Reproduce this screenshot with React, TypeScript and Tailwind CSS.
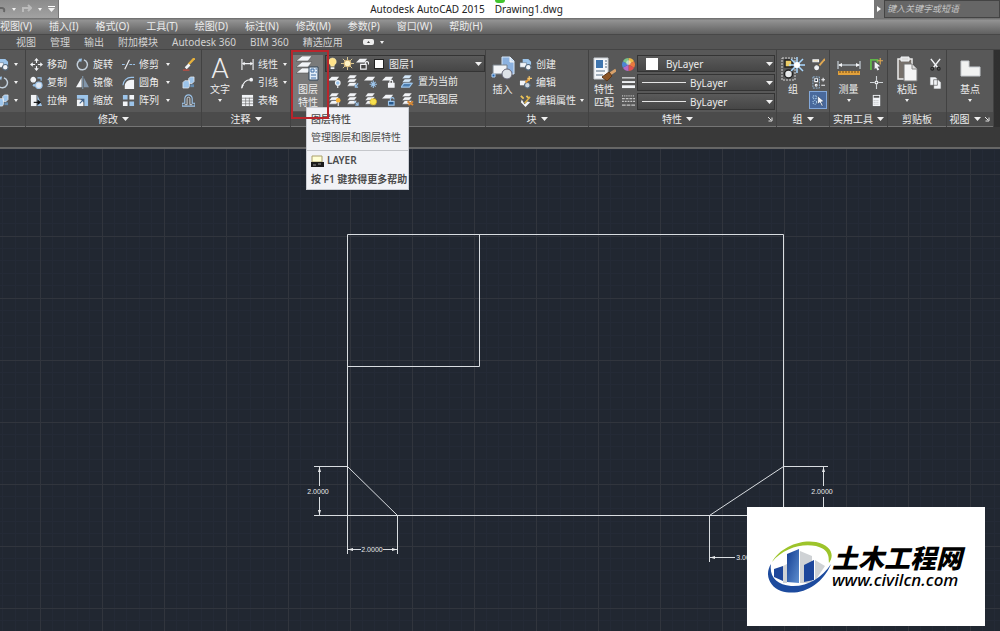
import type { ReactNode } from "react";
import clsx from "clsx";

type Children = { children?: ReactNode };

const W = "#f2f4f7";
const B = "#9cc4ea";

function Ico({ children, size = 13 }: Children & { size?: number }) {
  return (
    <svg width={size} height={size} viewBox="0 0 14 14" fill="none" stroke={W} strokeWidth="1.2" className="shrink-0" aria-hidden="true">
      {children}
    </svg>
  );
}

function Caret({ small }: { small?: boolean }) {
  return (
    <svg width={small ? 4 : 7} height={small ? 3 : 4} viewBox="0 0 8 4" preserveAspectRatio="none" className="shrink-0" aria-hidden="true">
      <path d="M0 0h8L4 4z" fill="#f0f0f0" />
    </svg>
  );
}

function Launcher() {
  return (
    <svg width="6" height="6" viewBox="0 0 6 6" className="absolute right-[3px] top-1" aria-hidden="true">
      <path d="M1 1l3 3M5 1.5V5H1.5" stroke="#e5e5e5" fill="none" />
    </svg>
  );
}

/* small ribbon icons */
const Move = () => (
  <Ico>
    <path d="M7 2v3.500M7 8.500v3.500M2 7h3.500M8.500 7H12" />
    <path d="M7 0l2.500 3h-5zM7 14l2.500-3h-5zM0 7l3-2.500v5zM14 7l-3-2.500v5z" fill={W} stroke="none" />
  </Ico>
);
const Rotate = () => (
  <Ico>
    <path d="M8.500 2A5.500 5.500 0 1 1 4.200 2.400" stroke="#c3d0dc" strokeWidth="1.600" />
    <path d="M2.500 1l4-.5-1 4z" fill={B} stroke="none" />
  </Ico>
);
const Trim = () => (
  <Ico>
    <path d="M0 7h4M8 7h6" stroke={B} strokeDasharray="3 1" />
    <path d="M3 12L8 2" />
  </Ico>
);
const Copy = () => (
  <Ico>
    <circle cx="3.500" cy="4" r="2.500" fill={W} />
    <circle cx="9.500" cy="10" r="3.500" fill="#dfe6f0" stroke={B} />
    <circle cx="4.500" cy="10" r="1.500" fill={B} stroke="none" />
    <path d="M8 2h4v3" stroke={B} />
  </Ico>
);
const Mirror = () => (
  <Ico>
    <path d="M6 2v10H0z" fill={W} stroke="none" />
    <path d="M8.500 2v10H14z" fill="#8296ab" stroke="none" />
    <path d="M7.300 0v14" stroke={B} strokeWidth=".7" />
  </Ico>
);
const Fillet = () => (
  <Ico>
    <path d="M3 14V11a7 7 0 0 1 7-7h3v10z" fill={W} stroke="none" />
    <path d="M1 10a9 9 0 0 1 9-8.500h3" stroke={B} />
  </Ico>
);
const Stretch = () => (
  <Ico>
    <path d="M1 1h6v12H1z" fill={W} stroke="none" />
    <path d="M8 1l5 12H8z" fill={B} stroke="none" />
    <path d="M4 9h5" stroke="#111" />
    <path d="M8 6l4 3-4 3z" fill="#111" stroke="none" />
  </Ico>
);
const Scale = () => (
  <Ico>
    <path d="M1 1h12v12H9V5H1z" fill={B} stroke="none" />
    <path d="M1 6h7v7H1z" fill={W} stroke="none" />
    <path d="M4 10l4-4M5 6h3v3" stroke="#40628a" />
  </Ico>
);
const ArrayIcon = () => (
  <Ico>
    <path d="M1 1h5v5H1zM8 8h5v5H8z" fill={B} stroke="none" />
    <path d="M8 1h5v5H8zM1 8h5v5H1z" fill={W} stroke="none" />
  </Ico>
);
const Erase = () => (
  <Ico>
    <path d="M13.500 0L7 7" stroke="#e5b13d" strokeWidth="2.500" />
    <path d="M8 7L4 11" strokeWidth="3" />
    <path d="M1 13h7" stroke="#d44a3d" />
  </Ico>
);
const Explode = () => (
  <Ico>
    <path d="M1 7l2-2h5v6l-1 2H1zM7 3l2-2h4v5l-2 2H8z" fill={B} stroke={W} strokeWidth=".7" />
    <path d="M9 9h4v3H9z" fill="#668caf" stroke="none" />
  </Ico>
);
const Offset = () => (
  <Ico>
    <path d="M0 13h14v-3h-3V5a4 4 0 0 0-8 0v5H0z" stroke={B} />
    <path d="M3 11.500h2.500V5a1.500 1.500 0 0 1 3 0v6.500H11" stroke={W} strokeWidth=".8" />
  </Ico>
);
const Linear = () => (
  <Ico>
    <path d="M1 1v12M13 1v12M2 6h10" />
    <path d="M1 6l3-2v4zM13 6l-3-2v4z" fill={W} stroke="none" />
  </Ico>
);
const Leader = () => (
  <Ico>
    <path d="M1 13C2 8 4 4 10 4" />
    <circle cx="11" cy="4" r="2" fill={W} stroke="none" />
    <path d="M0 14l1-5 2 1z" fill={W} stroke="none" />
  </Ico>
);
const TableIcon = () => (
  <Ico>
    <path d="M1 1h12v12H1z" fill={W} stroke="none" />
    <path d="M0 4.500h14M0 7.500h14M0 10.500h14M5 4v10M9 4v10" stroke="#666" strokeWidth=".7" />
  </Ico>
);

function Sheets({ tone = W, children }: Children & { tone?: string }) {
  return (
    <Ico>
      <path d="M4 0h8L9 4H1zM4 4h8l-3 4H1zM4 8h8l-3 4H1z" fill={tone} stroke="#444" strokeWidth=".5" />
      {children}
    </Ico>
  );
}
function Sheet({ children }: Children) {
  return (
    <Ico>
      <path d="M4 2h8L9 6H0z" fill={W} stroke="none" />
      {children}
    </Ico>
  );
}
const Bulb = () => (
  <Ico>
    <path d="M7 1a4 4 0 0 0-2 7.500V10h4V8.500A4 4 0 0 0 7 1z" fill="#ffe38a" stroke="#fff2bd" strokeWidth=".5" />
    <path d="M5 12h4" strokeWidth="2" />
  </Ico>
);
const Sun = () => (
  <Ico>
    <path d="M7 0v14M0 7h14M2 2l10 10M12 2L2 12" stroke="#f4dfa0" strokeWidth=".9" />
    <circle cx="7" cy="7" r="3.500" fill="#fff4c5" stroke="#d8b878" />
  </Ico>
);
const Unlock = () => (
  <Sheet>
    <path d="M5 8h6v5H5z" fill="#444" />
    <path d="M10 8V6a2 2 0 0 1 3.500 0v2" />
  </Sheet>
);

const layerTools = [
  [
    <Sheet key="a"><circle cx="10.500" cy="8.500" r="2.500" fill={B} /><path d="M10.500 11v3" /></Sheet>,
    <Sheets key="b"><path d="M13 9l-3 4M10 10v3h3" stroke={B} /></Sheets>,
    <Sheet key="c"><path d="M10 6v8M6 10h8M7.500 7.500l5 5M12.500 7.500l-5 5" stroke={B} /></Sheet>,
    <Sheet key="d"><path d="M7 9h6v4H7z" fill={W} /><path d="M8.500 9V7a1.500 1.500 0 0 1 3 0v2" /></Sheet>,
    <Sheets key="e" tone="#d4e7f8"><path d="M3 9h9l-3 4H0z" fill="#4c7eb1" stroke={B} /></Sheets>,
  ],
  [
    <Sheets key="a"><circle cx="11" cy="8" r="2.500" fill="#ffb938" stroke="none" /><path d="M11 10v4" /></Sheets>,
    <Sheets key="b"><path d="M9 9l4 4M13 10v3h-3" stroke={B} /></Sheets>,
    <Sheets key="c"><circle cx="10" cy="9.500" r="3.500" fill="#f6e04e" stroke="#d5ac25" strokeDasharray="1 1" /></Sheets>,
    <Sheet key="d"><path d="M7 9h6v4H7z" fill="#28598c" stroke={B} /><path d="M9 9V7a2 2 0 0 1 4 0" stroke={B} /></Sheet>,
    <Sheets key="e"><path d="M7 9l6 4M13 9l-5 4" stroke="#d78a38" strokeWidth="2" /></Sheets>,
  ],
];

const Create = () => (
  <Ico>
    <path d="M4 1h6l3 3v4H4z" fill={B} stroke="none" />
    <path d="M1 5h7v5H1z" fill={W} stroke="#526679" strokeWidth=".5" />
    <circle cx="10" cy="10" r="3" fill={W} stroke="#526679" />
  </Ico>
);
const EditBlock = () => (
  <Ico>
    <path d="M1 5h7v5H1z" fill={W} stroke="none" />
    <circle cx="9" cy="10" r="3" fill="#ccd5df" stroke="#526679" />
    <path d="M7 7l5-5" stroke="#e39a3b" strokeWidth="2" />
    <path d="M11 0v5M9 2.500h5" stroke="#f5c56a" />
  </Ico>
);
const EditAttr = () => (
  <Ico>
    <path d="M2 2l3 3M8 2l3 3" stroke="#ecc45a" strokeWidth="2" />
    <path d="M3 6l3 5 3-3 3 1-5 5-5-5z" fill={W} stroke="none" />
    <path d="M6 10l6-7" stroke="#deb244" strokeWidth="1.500" />
  </Ico>
);
const Wheel = () => (
  <Ico>
    <path d="M7 7V0a7 7 0 0 1 6 3.500z" fill="#efb943" stroke="none" />
    <path d="M7 7l6-3.500a7 7 0 0 1 0 7z" fill="#e9793f" stroke="none" />
    <path d="M7 7l6 3.500A7 7 0 0 1 7 14z" fill="#e0504d" stroke="none" />
    <path d="M7 7v7a7 7 0 0 1-6-3.500z" fill="#b46ac6" stroke="none" />
    <path d="M7 7l-6 3.500a7 7 0 0 1 0-7z" fill="#4c84d3" stroke="none" />
    <path d="M7 7L1 3.500A7 7 0 0 1 7 0z" fill="#7cc38a" stroke="none" />
    <circle cx="7" cy="5" r="2.500" fill="#fff" fillOpacity=".5" stroke="none" />
  </Ico>
);
const Weights = () => (
  <Ico>
    <path d="M0 2h14" />
    <path d="M0 6.500h14" strokeWidth="2" />
    <path d="M0 11.500h14" strokeWidth="3" />
  </Ico>
);
const Dashes = () => (
  <Ico>
    <path d="M0 2h14" strokeDasharray="1 1" stroke="#c4c4c4" />
    <path d="M0 5h14" strokeDasharray="3 1" stroke="#c4c4c4" />
    <path d="M0 8h14" strokeDasharray="2 1" stroke="#c4c4c4" />
    <path d="M0 12h14" strokeDasharray="4 1" stroke="#c4c4c4" />
  </Ico>
);
const Ungroup = () => (
  <Ico>
    <path d="M1 2h6v2H1z" fill="#f4d58d" stroke={W} />
    <circle cx="5" cy="10.500" r="2" fill={W} />
    <path d="M14 1L8 8" stroke="#e0a852" strokeWidth="2" />
  </Ico>
);
const GroupEdit = () => (
  <Ico>
    <path d="M1 1h7v12H1z" stroke={B} strokeWidth=".9" strokeDasharray="2 1" />
    <path d="M3 3h3v3H3z" fill="#1c2c3f" />
    <circle cx="4.500" cy="10" r="1" />
    <path d="M10 4h4M12 2v4M10 10h4" />
  </Ico>
);
const GroupSelect = () => (
  <Ico>
    <path d="M1 2h4v3H1z" stroke="#a8cce8" strokeDasharray="1 1" />
    <circle cx="3" cy="9" r="2" stroke="#a8cce8" strokeDasharray="1 1" />
    <path d="M6 2l7 6-3 .5 2 4-1.500.7-2-4L6 11z" fill={W} stroke="#28405f" strokeWidth=".6" />
  </Ico>
);
const QuickSelect = () => (
  <Ico>
    <path d="M1 13V2h7v3" stroke="#5fb548" strokeWidth="2" />
    <path d="M5 4l6 5-3 .5 2 3-2 1-1.500-3L5 12z" fill={W} stroke="none" />
    <path d="M11 0v7M8 3h6" stroke="#e0a852" />
  </Ico>
);
const PointIcon = () => (
  <Ico>
    <path d="M7 0v5M7 9v5M0 7h5M9 7h5" stroke="#cfd3d6" />
    <circle cx="7" cy="7" r="1.500" />
  </Ico>
);
const Calc = () => (
  <Ico>
    <path d="M3 1h8v12H3z" fill={W} stroke="none" />
    <path d="M4 3h6" stroke="#555" strokeWidth="2" />
    <path d="M4 7h6M4 9h6M4 11h6" stroke="#999" strokeWidth=".7" strokeDasharray="1 1" />
  </Ico>
);
const Cut = () => (
  <Ico>
    <path d="M2 1l7 9M12 1l-7 9" strokeWidth="1.500" />
    <circle cx="3.500" cy="11.500" r="1.500" stroke="#222" />
    <circle cx="10.500" cy="11.500" r="1.500" stroke="#222" />
  </Ico>
);
const CopyClip = () => (
  <Ico>
    <path d="M1 1h6l2 2v7H1zM5 4h5l3 3v7H5z" fill={W} stroke="#555" strokeWidth=".7" />
  </Ico>
);

/* large ribbon icons, 24 x 26 */
function Big({ children }: Children) {
  return (
    <svg width="24" height="26" viewBox="0 0 24 26" fill="none" stroke={W} className="shrink-0" aria-hidden="true">
      {children}
    </svg>
  );
}
const LayerBig = () => (
  <Big>
    <path d="M6 12h10l-4 5H0zM6 6h10l-4 5H0zM6 0h10l-4 5H0z" fill={W} stroke="#555" strokeWidth=".6" />
    <path d="M13 11h9v13h-9z" fill="#e3edf8" stroke="#2f4357" />
    <path d="M15 13h3v3h-3zM15 19h5M15 22h5M19.500 13h1.500M19.500 16h1.500" stroke="#3a6ba3" />
  </Big>
);
const InsertBig = () => (
  <Big>
    <path d="M11 1h8l4 4v13H11z" fill="#8bb1df" stroke="#d5e7fa" />
    <path d="M19 1v5h4" fill="#d5e7fa" />
    <path d="M2 9h14v9H2z" fill={W} stroke="#77808a" />
    <circle cx="16" cy="18" r="5" fill="#dde2e8" stroke="#667" />
    <path d="M1 18h3v3H1z" fill="#2466b1" stroke="#b1d0f2" />
  </Big>
);
const MatchBig = () => (
  <Big>
    <path d="M2 2h14v21H2z" fill="#f5f7fa" stroke="#c8cdd2" />
    <path d="M4 4h7v8H4z" fill="#3f75ae" stroke="none" />
    <path d="M13 5h2M13 8h2M13 11h2M4 15h9M4 19h7" stroke="#526a80" />
    <path d="M24 14l-6 4" stroke="#d8a16a" strokeWidth="3" />
    <path d="M17 16l3 4-5 5-5-4z" fill="#8b5527" stroke="#5c371b" />
  </Big>
);
const GroupBig = () => (
  <Big>
    <path d="M1 2h13v22H1z" stroke="#d5d5d5" strokeDasharray="2 1" />
    <path d="M4 4h7v7H4z" fill="#eacb67" stroke="#222" strokeWidth="1.500" />
    <circle cx="7.500" cy="18" r="4" fill="#e7e9ea" stroke="#222" strokeWidth="1.500" />
    <path d="M16 1v16M8 9h16M10 3l12 12M22 3L10 15" stroke="#a9d8ff" strokeWidth="1.500" />
    <circle cx="16" cy="9" r="3" fill="#fff" stroke="none" />
  </Big>
);
const MeasureBig = () => (
  <Big>
    <path d="M1 5v8M23 5v8M2 9h20" stroke="#dce8f2" />
    <path d="M1 9l4-2v4zM23 9l-4-2v4z" fill={W} stroke="none" />
    <path d="M1 15h22v4H1z" fill="#e2a13b" stroke="none" />
    <path d="M3 15v2M6 15v2M9 15v2M12 15v2M15 15v2M18 15v2M21 15v2" stroke="#704b18" />
  </Big>
);
const PasteBig = () => (
  <Big>
    <path d="M3 3h14v20H3z" fill="#77706a" stroke="#ebebeb" strokeWidth="1.500" />
    <path d="M6 1h8v4H6z" fill="#ddd" />
    <path d="M9 8h8l5 5v12H9z" fill="#f5f5f5" stroke="#777" />
    <path d="M17 8v5h5" fill="#ddd" stroke="#888" />
  </Big>
);
const BaseBig = () => (
  <Big>
    <path d="M3 5h8v6h11v9H3z" fill="#f1f2f2" stroke="#c7cbd0" />
  </Big>
);

function Tool({ icon, label, arrow, className }: { icon: ReactNode; label: string; arrow?: boolean; className?: string }) {
  return (
    <button className={clsx("flex h-[18px] items-center gap-1", className)}>
      {icon}
      <span className="whitespace-nowrap">{label}</span>
      {arrow && <span className="ml-auto"><Caret small /></span>}
    </button>
  );
}

function IconButton({ label, children, active }: Children & { label: string; active?: boolean }) {
  return (
    <button
      aria-label={label}
      className={clsx("flex h-[18px] w-[18px] items-center justify-center", active && "border border-[#83a8da] bg-[#49699c]")}
    >
      {children}
    </button>
  );
}

function BigButton({ icon, lines, arrow, className }: { icon: ReactNode; lines: string[]; arrow?: boolean; className?: string }) {
  return (
    <button className={clsx("flex shrink-0 flex-col items-center leading-[13px]", className)}>
      <span className="flex h-7 items-center">{icon}</span>
      {lines.map((l) => <span key={l}>{l}</span>)}
      {arrow && <span className="flex h-2 items-center"><Caret small /></span>}
    </button>
  );
}

function Panel({ title, caret, launcher, className, children }: Children & { title?: string; caret?: boolean; launcher?: boolean; className?: string }) {
  return (
    <section className={clsx("flex shrink-0 flex-col border-r border-[#424242] bg-[#585858]", className)}>
      <div className="flex h-[62px] pt-[5px]">{children}</div>
      <h2 className={clsx("relative flex h-[15px] items-center justify-center gap-1 border-b border-[#757575] bg-[#4b4b4b]", launcher && "pr-[10px]")}>
        {title}
        {caret && <Caret />}
        {launcher && <Launcher />}
      </h2>
    </section>
  );
}

function PropertySelect({ label, lead }: { label: string; lead: ReactNode }) {
  return (
    <label className="flex h-[17px] items-center border border-[#343434] bg-linear-to-b from-[#5a5a5a] to-[#464646] pr-px">
      {lead}
      <select aria-label={label} className="min-w-0 flex-1 appearance-none bg-transparent outline-none">
        <option>ByLayer</option>
      </select>
      <Caret />
    </label>
  );
}

function TitleBar() {
  return (
    <header className="flex h-[18px] bg-white">
      <div className="flex w-[59px] items-center gap-[6px] border-r border-[#777] bg-linear-to-b from-[#8b8b8b] to-[#a2a2a2]">
        <button aria-label="放弃">
          <svg width="6" height="10" viewBox="0 0 6 10" fill="none" stroke="#666" strokeWidth="2"><path d="M0 4h2q3 0 2 4" /></svg>
        </button>
        <Caret small />
        <button aria-label="重做">
          <svg width="10" height="10" viewBox="0 0 10 10" fill="none" stroke="#bbb" strokeWidth="2"><path d="M1 8V4h7M6 1l3 3-3 3" /></svg>
        </button>
        <Caret small />
        <button aria-label="自定义快速访问工具栏" className="flex flex-col items-center gap-px">
          <span className="h-px w-[7px] bg-white" />
          <Caret />
        </button>
      </div>
      <h1 className="relative flex flex-1 items-center justify-center gap-[10px] text-[#222]">
        <span>Autodesk AutoCAD 2015</span>
        <span>Drawing1.dwg</span>
        <i className="absolute top-0 ml-[66px] h-[3px] w-[10px] rounded-b-full bg-[#43c52e]" />
      </h1>
      <button aria-label="展开搜索" className="flex w-[10px] items-center justify-center bg-[#777]">
        <svg width="4" height="6" viewBox="0 0 4 6"><path d="M0 0l4 3-4 3z" fill="#fff" /></svg>
      </button>
      <input
        aria-label="搜索"
        placeholder="键入关键字或短语"
        className="w-[116px] border border-[#444] bg-[#666] px-[2px] text-[9px] italic text-white outline-none placeholder:text-[#c7c7c7]"
      />
    </header>
  );
}

const menus = ["视图(V)", "插入(I)", "格式(O)", "工具(T)", "绘图(D)", "标注(N)", "修改(M)", "参数(P)", "窗口(W)", "帮助(H)"];
const tabs = ["视图", "管理", "输出", "附加模块", "Autodesk 360", "BIM 360", "精选应用"];

function LayerTip() {
  return (
    <div role="tooltip" className="absolute left-[15px] top-[57px] z-10 w-[103px] border border-[#c9ccd2] bg-[#f1f2f6] text-[#4c4c4c]">
      <div className="flex flex-col px-1 pt-[2px] leading-[18px]">
        <strong className="font-medium">图层特性</strong>
        <span className="whitespace-nowrap">管理图层和图层特性</span>
      </div>
      <div className="mt-1 flex flex-col border-t border-[#c5c7cb] px-1 leading-[19px]">
        <strong className="flex items-center gap-[3px] font-semibold">
          <svg width="13" height="12" viewBox="0 0 13 12" aria-hidden="true">
            <path d="M1 1h10v6H1z" fill="#ffffd5" stroke="#aaa06a" />
            <path d="M0 7h13v5H0z" fill="#1b1b1b" />
            <path d="M2 10h3M7 9h3" stroke="#999" />
          </svg>
          LAYER
        </strong>
        <strong className="whitespace-nowrap font-semibold">按 F1 键获得更多帮助</strong>
      </div>
    </div>
  );
}

function Ribbon() {
  return (
    <div className="flex bg-linear-to-r from-[#585858] to-[#303030]">
      <Panel className="w-[26px]">
        <div className="flex flex-col">
          {[<Create key="0" />, <Rotate key="1" />, <Explode key="2" />].map((icon, i) => (
            <button key={i} aria-label="绘图" className="flex h-[18px] w-[18px] items-center justify-between overflow-hidden">
              <span className="-ml-1">{icon}</span>
              <Caret small />
            </button>
          ))}
        </div>
      </Panel>

      <Panel title="修改" caret className="w-[176px]">
        <div className="grid w-full grid-cols-[46px_46px_57px_1fr] content-start pl-1">
          <Tool icon={<Move />} label="移动" />
          <Tool icon={<Rotate />} label="旋转" />
          <Tool icon={<Trim />} label="修剪" arrow className="w-[48px]" />
          <IconButton label="删除"><Erase /></IconButton>
          <Tool icon={<Copy />} label="复制" />
          <Tool icon={<Mirror />} label="镜像" />
          <Tool icon={<Fillet />} label="圆角" arrow className="w-[48px]" />
          <IconButton label="分解"><Explode /></IconButton>
          <Tool icon={<Stretch />} label="拉伸" />
          <Tool icon={<Scale />} label="缩放" />
          <Tool icon={<ArrayIcon />} label="阵列" arrow className="w-[48px]" />
          <IconButton label="偏移"><Offset /></IconButton>
        </div>
      </Panel>

      <Panel title="注释" caret className="w-[89px]">
        <BigButton
          icon={<span className="font-['Roboto',sans-serif] text-[28px] font-light leading-7">A</span>}
          lines={["文字"]}
          arrow
          className="w-[36px]"
        />
        <div className="ml-[3px] flex w-[46px] flex-col">
          <Tool icon={<Linear />} label="线性" arrow />
          <Tool icon={<Leader />} label="引线" arrow />
          <Tool icon={<TableIcon />} label="表格" />
        </div>
      </Panel>

      <div className="relative flex">
        <Panel className="w-[195px]">
          <BigButton icon={<LayerBig />} lines={["图层", "特性"]} className="ml-[2px] mr-[2px] h-[56px] w-[30px] bg-[#7a7a7a]" />
          <div className="flex flex-1 flex-col">
            <label className="flex h-[17px] items-center gap-[2px] border border-[#343434] bg-linear-to-b from-[#5a5a5a] to-[#464646] pr-[2px]">
              <Bulb />
              <Sun />
              <Unlock />
              <i className="mx-[3px] size-[10px] border border-[#222] bg-white" />
              <select aria-label="图层" className="min-w-0 flex-1 appearance-none bg-transparent outline-none">
                <option>图层1</option>
              </select>
              <Caret />
            </label>
            {layerTools.map((row, r) => (
              <div key={r} className="flex h-[18px] items-center">
                {row.slice(0, 4).map((icon, i) => <IconButton key={i} label="图层工具">{icon}</IconButton>)}
                <Tool icon={row[4]} label={r ? "匹配图层" : "置为当前"} className="ml-1" />
              </div>
            ))}
          </div>
        </Panel>
        <LayerTip />
        <i className="pointer-events-none absolute left-0 top-0 z-20 h-[69px] w-[38px] border-2 border-[#b9252c]" />
      </div>

      <Panel title="块" caret className="w-[103px]">
        <BigButton icon={<InsertBig />} lines={["插入"]} className="w-[33px]" />
        <div className="flex w-[65px] flex-col">
          <Tool icon={<Create />} label="创建" />
          <Tool icon={<EditBlock />} label="编辑" />
          <Tool icon={<EditAttr />} label="编辑属性" arrow />
        </div>
      </Panel>

      <Panel title="特性" caret launcher className="w-[188px]">
        <BigButton icon={<MatchBig />} lines={["特性", "匹配"]} className="w-[30px]" />
        <div className="flex flex-col">
          <IconButton label="颜色"><Wheel /></IconButton>
          <IconButton label="线宽"><Weights /></IconButton>
          <IconButton label="线型"><Dashes /></IconButton>
        </div>
        <div className="flex flex-1 flex-col gap-[2px] pr-px">
          <PropertySelect label="对象颜色" lead={<i className="ml-2 mr-2 size-3 bg-white" />} />
          <PropertySelect label="对象线宽" lead={<i className="mx-1 h-px w-[44px] bg-[#e5e5e5]" />} />
          <PropertySelect label="对象线型" lead={<i className="mx-1 h-px w-[44px] bg-[#e5e5e5]" />} />
        </div>
      </Panel>

      <Panel title="组" caret className="w-[53px]">
        <BigButton icon={<GroupBig />} lines={["组"]} className="w-[32px]" />
        <div className="flex flex-col">
          <IconButton label="解除编组"><Ungroup /></IconButton>
          <IconButton label="组编辑"><GroupEdit /></IconButton>
          <IconButton label="启用组选择" active><GroupSelect /></IconButton>
        </div>
      </Panel>

      <Panel title="实用工具" caret className="w-[58px]">
        <BigButton icon={<MeasureBig />} lines={["测量"]} arrow className="w-[37px]" />
        <div className="flex flex-col">
          <IconButton label="快速选择"><QuickSelect /></IconButton>
          <IconButton label="点坐标"><PointIcon /></IconButton>
          <IconButton label="计算器"><Calc /></IconButton>
        </div>
      </Panel>

      <Panel title="剪贴板" className="w-[59px]">
        <BigButton icon={<PasteBig />} lines={["粘贴"]} arrow className="w-[38px]" />
        <div className="flex flex-col">
          <IconButton label="剪切"><Cut /></IconButton>
          <IconButton label="复制到剪贴板"><CopyClip /></IconButton>
        </div>
      </Panel>

      <Panel title="视图" caret launcher className="w-[47px]">
        <BigButton icon={<BaseBig />} lines={["基点"]} arrow className="w-full" />
      </Panel>
    </div>
  );
}

function Drawing() {
  return (
    <svg className="block w-full flex-1" fill="none" stroke="#d9dde1" role="img" aria-label="Drawing1">
      <defs>
        <pattern id="grid" x="40" y="25" width="62" height="62" patternUnits="userSpaceOnUse">
          <path d="M12.500 0v62M24.500 0v62M37.500 0v62M49.500 0v62M0 12.500h62M0 24.500h62M0 37.500h62M0 49.500h62" stroke="#242a36" />
          <path d="M.5 0v62M0 .5h62" stroke="#31353d" />
        </pattern>
      </defs>
      <rect width="100%" height="100%" fill="url(#grid)" stroke="none" />
      <path d="M347.500 405V85.500h436V367M314 366.500h470M347.500 217.500h132v-132" />
      <path d="M347.500 317.500l50 49V405M783.500 317.500l-74 49V413" />
      <path d="M314 317.500h33M319.500 317v20M319.500 348v18M784 317.500h44M823.500 317v20M823.500 348v40M347 400.500h14M383 400.500h14M710 408.500h25M770 408.500h30" />
      <path
        d="M319.500 318l1.500 5h-3zM319.500 366l1.500-5h-3zM823.500 318l1.500 5h-3zM348 400.500l5-1.500v3zM397 400.500l-5-1.500v3zM710 408.500l5-1.500v3z"
        fill="#e8eaec"
        stroke="none"
      />
      <g fill="#e8eaec" stroke="none" fontSize="7" textAnchor="middle" fontFamily="Liberation Sans, sans-serif">
        <text x="318" y="345">2.0000</text>
        <text x="822" y="345">2.0000</text>
        <text x="372" y="403">2.0000</text>
        <text x="747" y="411">3.0000</text>
      </g>
    </svg>
  );
}

function Watermark() {
  return (
    <aside className="absolute bottom-[5px] right-[15px] flex h-[119px] w-[238px] items-center bg-white pl-[21px] text-black">
      <svg width="64" height="53" viewBox="0 0 64 53" className="shrink-0" aria-hidden="true">
        <defs>
          <linearGradient id="tower" x2="1" y2="1">
            <stop stopColor="#123c91" />
            <stop offset="1" stopColor="#5e8fd0" />
          </linearGradient>
        </defs>
        <path d="M32 11l12 5v27H32zM15 26l4-2v19h-4zM47 20l10 6-10 15z" fill="#cfd2d5" />
        <path d="M6 29l9-3v15l-9-4z" fill="#1d469b" />
        <path d="M19 14l12-5v34l-12-1z" fill="url(#tower)" />
        <path d="M36 25l10-5v20l-10 2z" fill="#1d469b" />
        <path d="M4 22C12 7 33-1 48 2c15 3 19 13 13 21-1-2 3-13-13-17C34 3 15 8 4 22z" fill="#9dc42b" />
        <path d="M3 24c-7 11-1 23 10 27 19 6 41-5 50-27-9 14-24 23-40 22C9 45 1 37 3 24z" fill="#1d4b9e" />
      </svg>
      <div className="flex flex-col gap-px italic">
        <strong className="whitespace-nowrap text-[26px] font-black leading-[26px]">土木工程网</strong>
        <a href="#" className="text-[17px] font-medium leading-[16px]">www.civilcn.com</a>
      </div>
    </aside>
  );
}

export default function App() {
  return (
    <div className="relative flex min-h-screen flex-col overflow-hidden bg-[#212731] font-['Noto_Sans','Noto_Sans_CJK_SC',sans-serif] text-[10px] leading-[14px] text-[#ececec]">
      <TitleBar />
      <nav className="flex h-[17px] items-center gap-[17px] border-b border-[#484848] bg-linear-to-b from-[#6a6a6a] via-[#929292] via-15% to-[#606060]">
        {menus.map((m) => <button key={m} className="whitespace-nowrap">{m}</button>)}
      </nav>
      <nav className="flex h-[15px] items-center gap-[14px] border-b border-[#444] bg-[#555] pl-4 text-[#d2d2d2]">
        {tabs.map((t) => <button key={t} className="whitespace-nowrap">{t}</button>)}
        <button aria-label="最小化功能区" className="ml-[6px] flex items-center gap-[6px]">
          <svg width="11" height="6" viewBox="0 0 11 6"><rect width="11" height="6" rx="2" fill="#eee" /><path d="M4 4l1.500-2L7 4z" fill="#444" /></svg>
          <Caret small />
        </button>
      </nav>
      <Ribbon />
      <div className="h-[22px] border-b-2 border-[#666] bg-[#393939]" />
      <main className="flex flex-1 flex-col">
        <Drawing />
      </main>
      <Watermark />
    </div>
  );
}
